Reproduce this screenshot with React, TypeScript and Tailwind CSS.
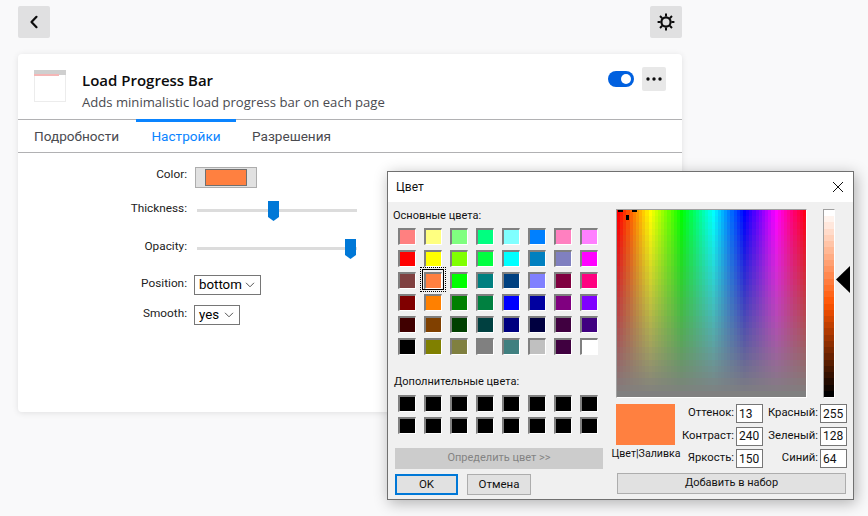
import React from "react";

const basic = [
  "#ff8080","#ffff80","#80ff80","#00ff80","#80ffff","#0080ff","#ff80c0","#ff80ff",
  "#ff0000","#ffff00","#80ff00","#00ff40","#00ffff","#0080c0","#8080c0","#ff00ff",
  "#804040","#ff8040","#00ff00","#008080","#004080","#8080ff","#800040","#ff0080",
  "#800000","#ff8000","#008000","#008040","#0000ff","#0000a0","#800080","#8000ff",
  "#400000","#804000","#004000","#004040","#000080","#000040","#400040","#400080",
  "#000000","#808000","#808040","#808080","#408080","#c0c0c0","#400040","#ffffff",
];

function Swatch({ color, selected }: { color: string; selected?: boolean }) {
  return (
    <div className="relative h-[17px] w-[18px]">
      <div
        className="h-full w-full border-b border-l-2 border-r border-t-2 border-b-white border-l-[#808080] border-r-white border-t-[#808080]"
        style={{ backgroundColor: color }}
      />
      {selected && (
        <div className="absolute -left-[4px] -top-[5px] h-[25px] w-[26px] border border-dotted border-black p-px">
          <div className="h-full w-full border border-black" />
        </div>
      )}
    </div>
  );
}

function Spectrum() {
  const cols = 60;
  const rows = 30;
  const cells = [];
  for (let y = 0; y < rows; y++) {
    for (let x = 0; x < cols; x++) {
      cells.push(
        <rect key={`${x}-${y}`} x={x} y={y} width={1.03} height={1.03} fill={`hsl(${(x / cols) * 360} ${100 - (y / (rows - 1)) * 100}% 50%)`} />
      );
    }
  }
  return (
    <svg viewBox="0 0 60 30" preserveAspectRatio="none" className="block h-full w-full" shapeRendering="crispEdges">
      {cells}
    </svg>
  );
}

function LumBar() {
  const steps = 30;
  const cells = [];
  for (let i = 0; i < steps; i++) {
    cells.push(<rect key={i} x={0} y={i} width={1} height={1.03} fill={`hsl(19.5 100% ${100 - (i / (steps - 1)) * 100}%)`} />);
  }
  return (
    <svg viewBox="0 0 1 30" preserveAspectRatio="none" className="block h-full w-full" shapeRendering="crispEdges">
      {cells}
    </svg>
  );
}

function Field({ label, value, labelW }: { label: string; value: string; labelW: string }) {
  return (
    <div className="flex h-[19px] items-center">
      <span className={`${labelW} whitespace-nowrap text-right text-[11.3px]`}>{label}</span>
      <div className="ml-[2px] flex h-[19px] w-[27px] items-center border border-[#767676] bg-white pl-[2px] text-[12px] text-[#111]">{value}</div>
    </div>
  );
}

function Select({ value, width }: { value: string; width: string }) {
  return (
    <div className={`${width} flex h-[20px] items-center justify-between border border-[#767676] bg-white pl-[4px] pr-[5px] text-[13.3px] text-black`}>
      <span>{value}</span>
      <svg width="10" height="6" viewBox="0 0 10 6" fill="none" stroke="#555" strokeWidth="1"><path d="M1 .8 5 4.8 9 .8" /></svg>
    </div>
  );
}

function Slider({ left }: { left: string }) {
  return (
    <div className="relative ml-[10px] h-[20px] w-[160px]">
      <div className="absolute left-0 right-0 top-[8px] h-[3px] bg-[#dcdcdc]" />
      <svg className={`absolute top-0 ${left}`} width="11" height="20" viewBox="0 0 11 20">
        <path d="M0 0H11V16L5.5 20 0 16Z" fill="#0078d7" />
      </svg>
    </div>
  );
}

const roboto = { fontFamily: 'Roboto, "Noto Sans", sans-serif' };

export default function App() {
  return (
    <div
      className="relative h-[516px] w-[868px] overflow-hidden bg-[#f9f9fa] px-[18px] pt-[6px] text-[#0c0c0d]"
      style={{ fontFamily: '"Open Sans", "Noto Sans", sans-serif' }}
    >
      <div className="flex w-[664px] justify-between">
        <button className="flex h-[32px] w-[32px] items-center justify-center rounded-[2px] bg-[#e0e0e1]">
          <svg width="10" height="14" viewBox="0 0 10 14" fill="none" stroke="#0c0c0d" strokeWidth="2.2" strokeLinecap="round" strokeLinejoin="round"><path d="M7.5 1.8 2.5 7l5 5.2" /></svg>
        </button>
        <button className="flex h-[32px] w-[32px] items-center justify-center rounded-[2px] bg-[#e0e0e1]">
          <svg width="18" height="18" viewBox="0 0 18 18" fill="none" stroke="#0c0c0d">
            <circle cx="9" cy="9" r="4.6" strokeWidth="2.2" />
            <path strokeWidth="2" d="M9 .6v3M9 14.4v3M.6 9h3M14.4 9h3M3 3l2.2 2.2M12.8 12.8 15 15M15 3l-2.2 2.2M5.2 12.8 3 15" />
          </svg>
        </button>
      </div>

      <div className="mt-[16px] h-[358px] w-[664px] rounded-[4px] bg-white shadow-[0_1px_6px_rgba(12,12,13,0.1)]">
        <div className="relative flex h-[65px] px-[16px] pt-[16px]">
          <svg width="32" height="32" viewBox="0 0 32 32" className="shrink-0">
            <rect x="0.5" y="0.5" width="31" height="31" fill="#fff" stroke="#ececec" />
            <rect width="32" height="5" fill="#cfcfcf" />
            <rect y="4" width="25" height="2" fill="#f4b6b6" />
          </svg>
          <div className="ml-[16px] -mt-[1px]">
            <div className="text-[15px] font-semibold leading-[22px]">Load Progress Bar</div>
            <div className="mt-[1px] text-[13.1px] leading-[20px] text-[#4a4a4f]">Adds minimalistic load progress bar on each page</div>
          </div>
          <div className="ml-auto -mt-[3px] flex h-[24px] items-center gap-[8px]">
            <div className="flex h-[16px] w-[26px] items-center justify-end rounded-full bg-[#0060df] pr-[3px]">
              <div className="h-[10px] w-[10px] rounded-full bg-white" />
            </div>
            <button className="flex h-[24px] w-[24px] items-center justify-center rounded-[2px] bg-[#e8e8e8]">
              <svg width="16" height="4" viewBox="0 0 16 4" fill="#0c0c0d"><circle cx="2" cy="2" r="1.7" /><circle cx="8" cy="2" r="1.7" /><circle cx="14" cy="2" r="1.7" /></svg>
            </button>
          </div>
        </div>

        <div className="flex h-[34px] border-y border-[#b1b1b3] text-[13.6px] text-[#4a4a4f]" style={roboto}>
          <div className="flex w-[118px] items-center pl-[16px]">Подробности</div>
          <div className="-mt-px flex w-[100px] items-center justify-center border-t-[3px] border-[#0a84ff] pb-[1px] text-[#0a84ff]">Настройки</div>
          <div className="flex items-center pl-[16px]">Разрешения</div>
        </div>

        <div className="pt-[14px] text-[11.8px] text-[#222]" style={roboto}>
          <div className="flex h-[21px] items-center">
            <span className="w-[169px] pb-[5px] text-right">Color:</span>
            <div className="ml-[8px] flex h-[21px] w-[62px] items-center justify-center border border-[#adadad] bg-[#e1e1e1]">
              <div className="h-[17px] w-[42px] border border-[#707070] bg-[#ff8040]" />
            </div>
          </div>
          <div className="mt-[13px] flex h-[20px] items-center">
            <span className="w-[169px] pb-[5px] text-right">Thickness:</span>
            <Slider left="left-[71px]" />
          </div>
          <div className="mt-[18px] flex h-[20px] items-center">
            <span className="w-[169px] pb-[5px] text-right">Opacity:</span>
            <Slider left="left-[148px]" />
          </div>
          <div className="mt-[16px] flex h-[20px] items-center">
            <span className="w-[169px] pb-[2px] text-right">Position:</span>
            <div className="ml-[7px]"><Select value="bottom" width="w-[67px]" /></div>
          </div>
          <div className="mt-[10px] flex h-[20px] items-center">
            <span className="w-[169px] pb-[2px] text-right">Smooth:</span>
            <div className="ml-[7px]"><Select value="yes" width="w-[46px]" /></div>
          </div>
        </div>
      </div>

      {/* Floating colour dialog */}
      <div
        className="absolute left-[387px] top-[171px] h-[329px] w-[467px] border border-[#707070] bg-[#f0f0f0] text-[11px] text-[#111] shadow-[2px_3px_14px_rgba(0,0,0,0.3)]"
        style={roboto}
      >
        <div className="flex h-[30px] items-center justify-between bg-white pl-[8px] pr-[9px]">
          <span className="text-[12px]">Цвет</span>
          <svg width="12" height="12" viewBox="0 0 12 12" fill="none" stroke="#111" strokeWidth="1"><path d="M1 1l10 10M11 1 1 11" /></svg>
        </div>

        <div className="flex">
          <div className="w-[228px] shrink-0 pl-[5px]">
            <div className="mt-[6px] h-[16px] leading-[16px] whitespace-nowrap">Основные цвета:</div>
            <div className="ml-[5px] mt-[4px] grid w-[200px] grid-cols-[repeat(8,18px)] gap-x-[8px] gap-y-[5px]">
              {basic.map((c, i) => <Swatch key={i} color={c} selected={i === 17} />)}
            </div>
            <div className="ml-[1px] mt-[19px] h-[16px] leading-[16px] whitespace-nowrap">Дополнительные цвета:</div>
            <div className="ml-[5px] mt-[5px] grid w-[200px] grid-cols-[repeat(8,18px)] gap-x-[8px] gap-y-[5px]">
              {Array.from({ length: 16 }).map((_, i) => <Swatch key={i} color="#000000" />)}
            </div>
            <div className="ml-[2px] mt-[14px] flex h-[21px] w-[208px] items-center justify-center bg-[#cccccc] text-[#838383]">Определить цвет &gt;&gt;</div>
            <div className="ml-[2px] mt-[5px] flex gap-[9px]">
              <button className="h-[21px] w-[63px] border-2 border-[#0078d7] bg-[#e1e1e1] text-[11.5px]">OK</button>
              <button className="h-[21px] w-[64px] border border-[#adadad] bg-[#e1e1e1] text-[11.5px]">Отмена</button>
            </div>
          </div>

          <div className="flex-1">
            <div className="mt-[7px] flex">
              <div className="h-[189px] w-[191px] border border-b-white border-l-[#a0a0a0] border-r-white border-t-[#a0a0a0]">
                <div className="relative h-full w-full">
                  <Spectrum />
                  <div className="absolute left-[1px] top-0 h-[2px] w-[5px] bg-black" />
                  <div className="absolute left-[15px] top-0 h-[2px] w-[5px] bg-black" />
                  <div className="absolute left-[9px] top-[5px] h-[5px] w-[3px] bg-black" />
                </div>
              </div>
              <div className="ml-[16px] h-[189px] w-[12px] border border-b-white border-l-[#a0a0a0] border-r-white border-t-[#a0a0a0]">
                <LumBar />
              </div>
              <svg className="ml-px mt-[57px]" width="14" height="27" viewBox="0 0 14 27"><path d="M14 0V27L0 13.5Z" fill="#000" /></svg>
            </div>

            <div className="mt-[6px] flex">
              <div className="-ml-[5px] w-[70px] shrink-0 text-center">
                <div className="ml-[5px] h-[41px] w-[59px] bg-[#ff8040]" />
                <div className="mt-px whitespace-nowrap text-[10.6px] leading-[16px]">Цвет|Заливка</div>
              </div>
              <div className="ml-px flex flex-col gap-[3.5px]">
                <Field label="Оттенок:" value="13" labelW="w-[52px]" />
                <Field label="Контраст:" value="240" labelW="w-[52px]" />
                <Field label="Яркость:" value="150" labelW="w-[52px]" />
              </div>
              <div className="ml-[2px] flex flex-col gap-[3.5px]">
                <Field label="Красный:" value="255" labelW="w-[53px]" />
                <Field label="Зеленый:" value="128" labelW="w-[53px]" />
                <Field label="Синий:" value="64" labelW="w-[53px]" />
              </div>
            </div>
            <div className="ml-px mt-[5px] flex h-[21px] w-[229px] items-center justify-center border border-[#adadad] bg-[#e1e1e1]">Добавить в набор</div>
          </div>
        </div>
      </div>
    </div>
  );
}
